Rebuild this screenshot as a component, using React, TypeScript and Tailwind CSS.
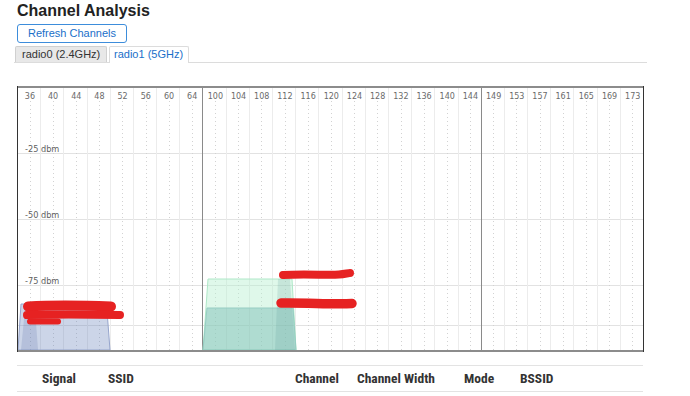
import React from "react";

const LABELS = [36, 40, 44, 48, 52, 56, 60, 64, 100, 104, 108, 112, 116, 120, 124, 128, 132, 136, 140, 144, 149, 153, 157, 161, 165, 169, 173];

function Chart() {
  const W = 626 / 27;
  const cols = LABELS.map((_, i) => i);
  return (
    <svg width={627} height={266} className="block" style={{ fontFamily: '"DejaVu Sans", sans-serif' }}>
      {[67, 133, 199, 239].map((y) => (
        <line key={"h" + y} x1={1} x2={626} y1={y + 0.5} y2={y + 0.5} stroke="#e2e2e2" strokeWidth={1} />
      ))}
      {cols.slice(1).map((i) => (
        <line
          key={"b" + i}
          x1={Math.round(i * W) + 0.5}
          x2={Math.round(i * W) + 0.5}
          y1={2}
          y2={264}
          stroke={i === 8 || i === 20 ? "#8a8a8a" : "#ececec"}
          strokeWidth={1}
        />
      ))}
      {cols.map((i) => (
        <line
          key={"d" + i}
          x1={Math.round((i + 0.5) * W) + 1.5}
          x2={Math.round((i + 0.5) * W) + 1.5}
          y1={15}
          y2={264}
          stroke="#d2d2d2"
          strokeWidth={1}
          strokeDasharray="1 3"
        />
      ))}
      {LABELS.map((l, i) => (
        <text key={"t" + l} x={(i + 0.5) * W + 1.3} y={12.5} fontSize={8} fill="#6a6a6a" textAnchor="middle">
          {l}
        </text>
      ))}
      {[
        ["-25 dbm", 66],
        ["-50 dbm", 132],
        ["-75 dbm", 198],
      ].map(([t, y]) => (
        <text key={t as string} x={8} y={y as number} fontSize={8.2} fill="#606060">
          {t}
        </text>
      ))}
      <polygon points="1,264 4,218 89.5,218 93,264" fill="rgb(110,135,190)" fillOpacity={0.35} stroke="rgb(150,165,205)" strokeWidth={1} />
      <polygon points="4,264 8,223 18,223 21,264" fill="rgb(110,130,180)" fillOpacity={0.25} />
      <polygon points="186,264 191,193 275,193 279,264" fill="rgb(185,240,208)" fillOpacity={0.45} stroke="rgb(175,232,200)" strokeWidth={1} />
      <polygon points="186,264 190,222 276,222 279,264" fill="rgb(110,180,175)" fillOpacity={0.42} stroke="rgb(150,205,195)" strokeWidth={1} />
      <polygon points="258,264 261,193 273,193 278,264" fill="rgb(90,150,150)" fillOpacity={0.18} />
      <g stroke="#e62222" strokeLinecap="round" fill="none">
        <path d="M11 220.5 C 35 219, 70 219.5, 94 220.5" strokeWidth={10} />
        <path d="M10 229 C 40 228, 80 228.5, 103 229" strokeWidth={8} />
        <path d="M13 235.5 L41 235.5" strokeWidth={6} />
        <path d="M266 189 C 290 187.5, 310 189.5, 322 188.5 C 328 188, 331 187, 333 187" strokeWidth={8} />
        <path d="M264 217 C 290 216.5, 315 218.5, 335 217.5" strokeWidth={9.5} />
      </g>
      <rect x={0} y={0} width={627} height={2} fill="#8c8c8c" />
      <rect x={0} y={264} width={627} height={2} fill="#8c8c8c" />
      <rect x={0} y={0} width={1} height={266} fill="#333" />
      <rect x={626} y={0} width={1} height={266} fill="#333" />
    </svg>
  );
}

export default function App() {
  return (
    <div
      className="w-[690px] h-[396px] overflow-hidden bg-white pl-[17px] text-[#222]"
      style={{ fontFamily: '"Liberation Sans", Arial, sans-serif' }}
    >
      <div className="pt-[1px] text-[16px] font-bold leading-[20px] text-[#222]">Channel Analysis</div>
      <button className="mt-[3px] flex h-[19px] w-[110px] items-center justify-center rounded-[3px] border border-[#3d8ddb] bg-white text-[11px] leading-[17px] text-[#1a6fc9]">
        Refresh Channels
      </button>
      <div className="-ml-[3px] mt-[3px] flex h-[17px] w-[633px] items-end border-b border-[#dcdcdc] pl-[1px]">
        <div className="flex h-[16px] w-[92px] items-center rounded-t-[2px] border border-b-0 border-[#d0d0d0] bg-[#e8e8e8] pl-[6px] text-[11px] leading-[15px] text-[#333]">
          radio0 (2.4GHz)
        </div>
        <div className="-mb-px ml-[2px] flex h-[17px] w-[80px] items-center rounded-t-[2px] border border-b-0 border-[#dcdcdc] bg-white pb-px pl-[4px] text-[11px] leading-[15px] text-[#1a6fc9]">
          radio1 (5GHz)
        </div>
      </div>
      <div className="mt-[23px]">
        <Chart />
      </div>
      <div
        className="mt-[13px] flex h-[27px] w-[626px] items-center border-y border-[#e3e3e3] text-[13.5px] font-bold text-[#333]"
        style={{ fontFamily: '"Liberation Sans Narrow", "Roboto Condensed", "Liberation Sans", sans-serif' }}
      >
        <div className="w-[91px] pl-[25px]">Signal</div>
        <div className="w-[187px]">SSID</div>
        <div className="w-[62px]">Channel</div>
        <div className="w-[107px]">Channel Width</div>
        <div className="w-[56px]">Mode</div>
        <div>BSSID</div>
      </div>
    </div>
  );
}
